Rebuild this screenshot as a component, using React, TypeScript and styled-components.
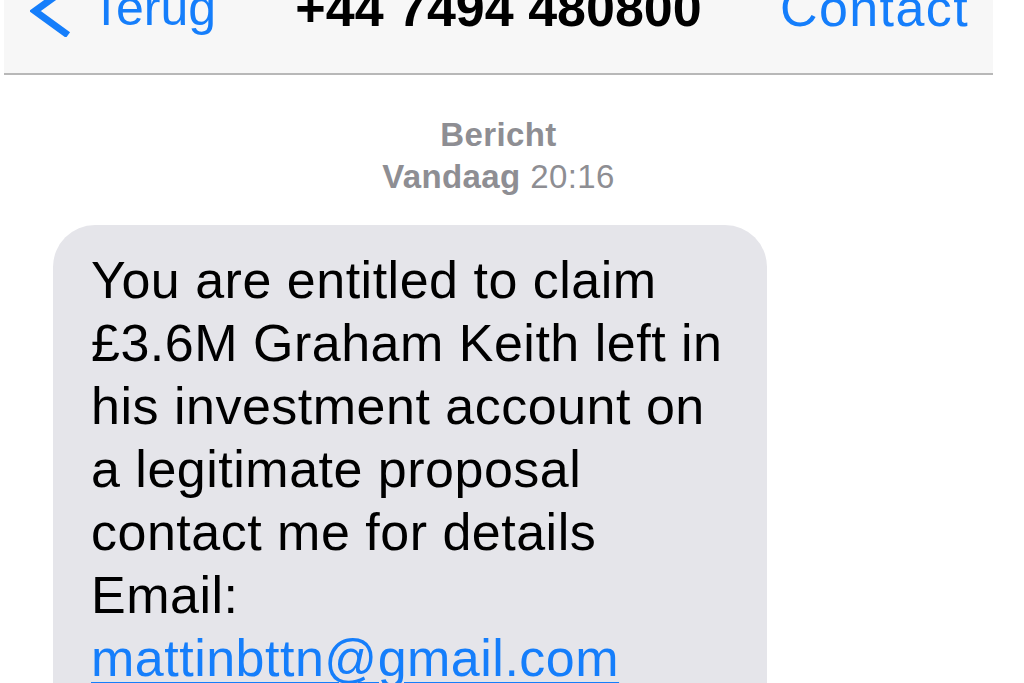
import React from 'react'
import styled, { createGlobalStyle } from 'styled-components'

const GlobalStyle = createGlobalStyle`
    html, body {
        margin: 0;
        padding: 0;
        background: #fff;
        overflow: hidden;
    }
    body {
        font-family: "Liberation Sans", Arial, sans-serif;
    }
`

const SScreen = styled.div`
    width: 1024px;
    height: 683px;
    padding: 0 31px 0 4px;
    box-sizing: border-box;
    overflow: hidden;
    display: flex;
    flex-direction: column;
`

const SNavBar = styled.header`
    height: 75px;
    flex: 0 0 75px;
    box-sizing: border-box;
    background: #f7f7f7;
    border-bottom: 2px solid #b8b8b8;
    overflow: hidden;
`

const SNavRow = styled.div`
    margin-top: -21px;
    height: 56px;
    display: grid;
    grid-template-columns: 1fr auto 1fr;
    align-items: center;
    line-height: 56px;
`

const SBack = styled.a`
    display: flex;
    align-items: center;
    gap: 19px;
    padding-left: 26px;
    color: #157efb;
    text-decoration: none;
    font-size: 50px;

    svg {
        align-self: flex-start;
        flex: none;
        margin-top: 2px;
    }
`

const STitle = styled.div`
    font-weight: 700;
    font-size: 52px;
    color: #000;
`

const SContact = styled.a`
    justify-self: end;
    padding-right: 24px;
    color: #157efb;
    text-decoration: none;
    font-size: 52px;
    letter-spacing: 1.4px;
`

const SThread = styled.main`
    flex: 1;
    display: flex;
    flex-direction: column;
    padding-top: 39px;
`

const SStamp = styled.div`
    text-align: center;
    color: #8e8e93;
    font-size: 33px;
    line-height: 42px;
    letter-spacing: 0.4px;
`

const SStampBold = styled.span`
    font-weight: 700;
`

const SBubble = styled.div`
    margin: 27px 0 0 49px;
    width: 714px;
    box-sizing: border-box;
    background: #e5e5ea;
    border-radius: 42px;
    padding: 24px 20px 40px 38px;
    color: #000;
    font-size: 52px;
    line-height: 63px;
    letter-spacing: 0.5px;
    white-space: nowrap;
`

const SMailLink = styled.a`
    color: #157efb;
    text-decoration: underline;
    text-decoration-thickness: 3px;
    text-underline-offset: 6px;
`

const Chevron = () => (
    <svg width="42" height="56" viewBox="0 0 42 56">
        <path d="M38 6 L5 30 L38 54" fill="none" stroke="#157efb" strokeWidth="7" />
    </svg>
)

const messageLines = [
    'You are entitled to claim',
    '£3.6M Graham Keith left in',
    'his investment account on',
    'a legitimate proposal',
    'contact me for details',
    'Email:',
]

export default function App() {
    return (
        <>
            <GlobalStyle />
            <SScreen>
                <SNavBar>
                    <SNavRow>
                        <SBack href="#">
                            <Chevron />
                            Terug
                        </SBack>
                        <STitle>+44 7494 480800</STitle>
                        <SContact href="#">Contact</SContact>
                    </SNavRow>
                </SNavBar>
                <SThread>
                    <SStamp>
                        <SStampBold>Bericht</SStampBold>
                        <br />
                        <SStampBold>Vandaag</SStampBold> 20:16
                    </SStamp>
                    <SBubble>
                        {messageLines.map((line, i) => (
                            <div key={i}>{line}</div>
                        ))}
                        <SMailLink href="#">mattinbttn@gmail.com</SMailLink>
                    </SBubble>
                </SThread>
            </SScreen>
        </>
    )
}
